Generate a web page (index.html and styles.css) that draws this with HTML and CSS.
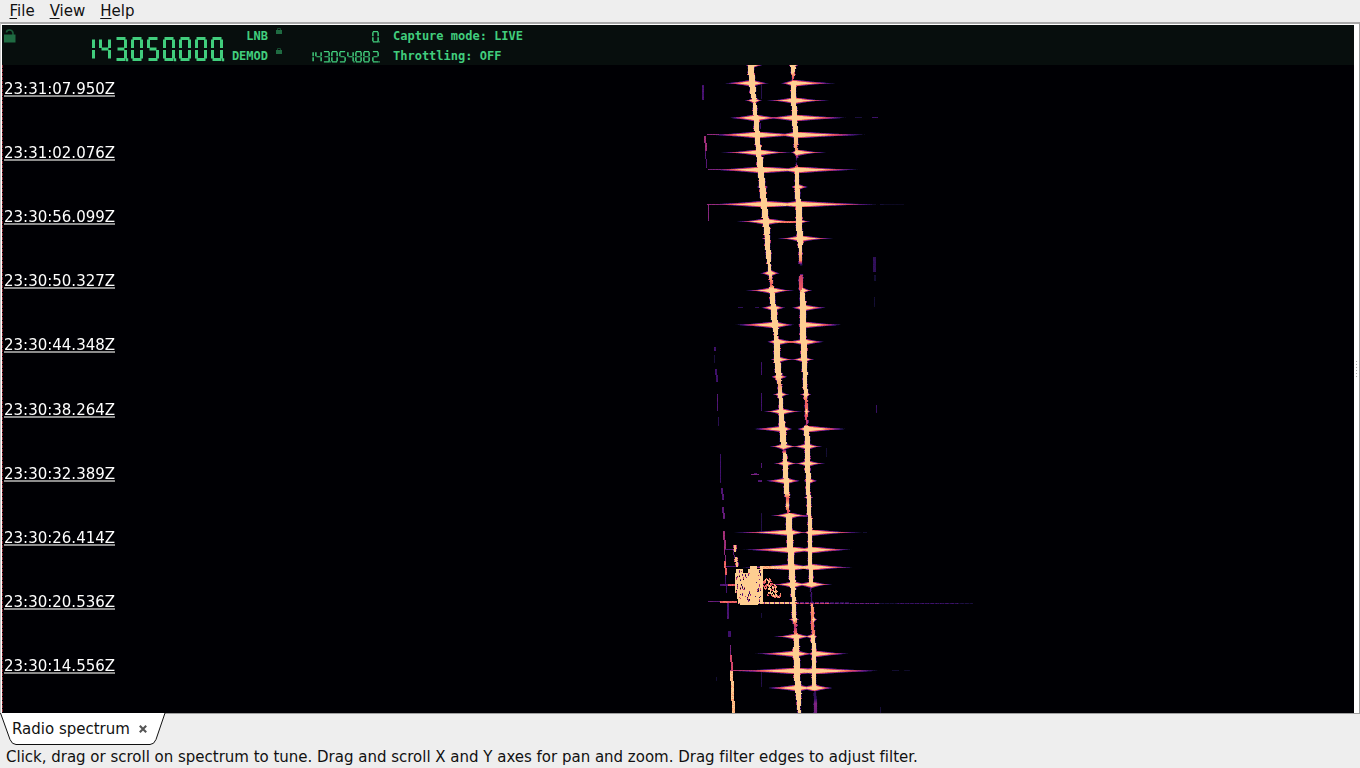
FILE: index.html
```html
<!DOCTYPE html>
<html lang="en">
<head>
    <meta charset="UTF-8">
    <meta name="viewport" content="width=device-width, initial-scale=1.0">
    <title>Radio spectrum</title>
    <link rel="stylesheet" href="styles.css">
</head>
<body>
    <nav class="menubar">
        <span><u>F</u>ile</span>
        <span><u>V</u>iew</span>
        <span><u>H</u>elp</span>
    </nav>

    <main class="frame">
        <div class="spectrum">
            <header class="tuner">
                <svg class="lock-main" viewBox="0 0 12 14" width="12" height="14">
                    <path d="M2.500 3.500Q2.500 1 5.500 1T9 4v2" fill="none" stroke="#1b5c39" stroke-width="1.6"/>
                    <rect x="0" y="5.500" width="11.500" height="8" fill="#1f6b42"/>
                </svg>
                <div class="lcd big" data-value="143.050.000."></div>
                <div class="labels">
                    <span>LNB</span>
                    <span>DEMOD</span>
                </div>
                <div class="locks">
                    <svg viewBox="0 0 6 7" width="6" height="7"><path d="M1.500 3V1.500h3V3" fill="none" stroke="#164a2f"/><rect y="3" width="6" height="4" fill="#1f6b42"/></svg>
                    <svg viewBox="0 0 6 7" width="6" height="7"><path d="M1.500 3V1.500h3V3" fill="none" stroke="#164a2f"/><rect y="3" width="6" height="4" fill="#1f6b42"/></svg>
                </div>
                <div class="offsets">
                    <div class="lcd small" data-value="0."></div>
                    <div class="lcd small" data-value="143.054.882."></div>
                </div>
                <div class="status">
                    <span>Capture mode: LIVE</span>
                    <span>Throttling: OFF</span>
                </div>
            </header>
            <div class="waterfall">
                <canvas id="waterfall" width="1352" height="648"></canvas>
                <div class="times">
                    <span>23:31:07.950Z</span>
                    <span>23:31:02.076Z</span>
                    <span>23:30:56.099Z</span>
                    <span>23:30:50.327Z</span>
                    <span>23:30:44.348Z</span>
                    <span>23:30:38.264Z</span>
                    <span>23:30:32.389Z</span>
                    <span>23:30:26.414Z</span>
                    <span>23:30:20.536Z</span>
                    <span>23:30:14.556Z</span>
                </div>
            </div>
        </div>
        <div class="splitter"><i></i><i></i><i></i><i></i><i></i><i></i></div>
    </main>

    <div class="tabs">
        <div class="tab">
            <svg class="tab-shape" width="168" height="32" viewBox="0 0 168 32">
                <path d="M0.5 0L10 26.5Q12 31.500 16 31.500H150Q154 31.500 156 26.500L165 0" fill="#fff" stroke="#111"/>
            </svg>
            <span>Radio spectrum</span>
            <svg class="close" width="8" height="8" viewBox="0 0 8 8"><path d="M0.800 0.800l6.400 6.400M7.200 0.800l-6.400 6.400" stroke="#555" stroke-width="2.1"/></svg>
        </div>
    </div>
    <footer class="statusbar">Click, drag or scroll on spectrum to tune. Drag and scroll X and Y axes for pan and zoom. Drag filter edges to adjust filter.</footer>

    <script src="waterfall.js"></script>
</body>
</html>
```
FILE: styles.css
```css
body {
    display: flex;
    flex-direction: column;
    height: 100vh;
    margin: 0;
    overflow: hidden;
    background-color: #eee;
    color: #111;
    font-family: "DejaVu Sans", sans-serif;
    font-size: 15px;
}
.menubar {
    display: flex;
    gap: 15px;
    height: 22px;
    padding-left: 9.500px;
    line-height: 22px;
}
.menubar u {
    text-underline-offset: 2px;
}
.frame {
    display: flex;
    box-sizing: border-box;
    height: 692px;
    padding: 1px 0 0 1px;
    border: 1px solid #a0a0a0;
    border-top: 2px solid #a9a9a9;
    border-left-color: #c8c8c8;
    background-color: #fff;
}
.spectrum {
    width: 1352px;
    background-color: #000004;
}
.tuner {
    display: flex;
    height: 40px;
    background-color: #070e0d;
    color: #41cd7d;
    font: bold 12px "DejaVu Sans Mono", monospace;
}
.lock-main {
    margin: 4px 0 0 2px;
}
.labels,
.status {
    display: flex;
    flex-direction: column;
    line-height: 20px;
    padding-top: 1px;
}
.labels {
    width: 44px;
    margin-left: 1px;
    text-align: right;
}
.locks {
    display: flex;
    flex-direction: column;
    gap: 13px;
    margin: 2px 0 0 8px;
}
.offsets {
    display: flex;
    flex-direction: column;
    align-items: flex-end;
    gap: 8.500px;
    width: 96.500px;
    margin-top: 6px;
}
.status {
    margin-left: 14.500px;
}

/* Seven segment readouts */
.lcd {
    display: flex;
}
.lcd.big {
    gap: 4px;
    width: 142px;
    margin: 11.500px 0 0 64.500px;
    padding-right: 0.500px;
    justify-content: flex-end;
}
.lcd.small {
    gap: 1.100px;
}
.lcd svg {
    overflow: visible;
    fill: none;
    stroke: #41cd7d;
    stroke-linecap: butt;
}
.big svg {
    width: 12px;
    height: 24px;
    stroke-width: 3px;
}
.small svg {
    width: 7px;
    height: 11.500px;
    stroke-width: 2.500px;
}

.waterfall {
    position: relative;
    height: 648px;
}
.waterfall canvas {
    display: block;
}
.times {
    position: absolute;
    top: 14px;
    left: 2px;
    display: flex;
    flex-direction: column;
    gap: 46.110px;
    color: #fff;
}
.times span {
    width: 111px;
    height: 16px;
    border-bottom: 2px solid #8c8c8c;
    line-height: 20px;
}
.splitter {
    display: flex;
    flex-direction: column;
    justify-content: center;
    gap: 2px;
    padding-left: 2px;
}
.splitter i {
    width: 1px;
    height: 1px;
    background-color: #aaa;
}

.tabs {
    height: 31px;
}
.tab {
    position: relative;
    display: flex;
    align-items: center;
    gap: 9px;
    width: 168px;
    height: 29px;
    padding-left: 12px;
    box-sizing: border-box;
}
.tab span,
.close {
    position: relative;
}
.tab-shape {
    position: absolute;
    top: -1px;
    left: 0;
}
.statusbar {
    flex-shrink: 0;
    padding: 1px 0 0 6px;
    line-height: 26px;
    letter-spacing: -0.008px;
    white-space: nowrap;
}
```
FILE: waterfall.js
```js
// ---- seven segment readouts ----
const SEGMENTS = {
    a: 'M1.500 1.500H10.500',
    b: 'M10.500 2.500V11',
    c: 'M10.500 13V21.500',
    d: 'M1.500 22.500H10.500',
    e: 'M1.500 13V21.500',
    f: 'M1.500 2.500V11',
    g: 'M2.500 12H9.500'
};
const DIGITS = {
    0: 'abcdef', 1: 'bc', 2: 'abged', 3: 'abgcd', 4: 'fgbc',
    5: 'afgcd', 6: 'afgedc', 7: 'abc', 8: 'abcdefg', 9: 'abcdfg'
};

document.querySelectorAll('.lcd').forEach(lcd => {
    lcd.setAttribute('aria-label', lcd.dataset.value);
    lcd.innerHTML = lcd.dataset.value.match(/\d\.?/g).map(cell => {
        let d = [...DIGITS[cell[0]]].map(s => SEGMENTS[s]).join('');
        if (cell[1]) d += 'M11 22.800h2.200';
        return `<svg viewBox="0 0 12 24" preserveAspectRatio="none"><path d="${d}"/></svg>`;
    }).join('');
});

// ---- waterfall ----
const X0 = 2, Y0 = 65, W = 1352, H = 648;
const level = new Float32Array(W * H);

let seed = 7;
function rnd() {
    seed = (seed * 1103515245 + 12345) % 2147483648;
    return seed / 2147483648;
}

function put(x, y, v) {
    x = Math.round(x) - X0;
    y = Math.round(y) - Y0;
    if (x < 0 || y < 0 || x >= W || y >= H) return;
    level[y * W + x] = Math.max(level[y * W + x], v);
}

// carriers: [y, centre, width, level]
const left = [
    [65, 751, 6, 1], [83, 752.3, 6, 1], [92, 752.7, 5, 1], [99, 754, 4, 1], [100, 753, 3, .4], [102, 754, 2, 0],
    [103, 755, 3, 1], [115, 755.700, 4, 1], [135, 757.5, 5, 1], [155, 759, 5, 1], [170, 761, 6, 1],
    [204, 764.3, 6, 1], [221, 766, 6, 1], [235, 767.3, 5, 1], [255, 768.5, 5, 1], [262, 769, 3, 1],
    [275, 770.5, 3, 1], [284, 771.5, 2, .7], [288, 771.8, 5, 1], [307, 773.5, 5, 1], [325, 775, 6, 1],
    [335, 776, 3, 1], [341, 776.5, 5, 1], [360, 777.5, 6, 1], [376, 778.5, 5, 1], [385, 779.5, 3, .9],
    [394, 780.5, 4, 1], [411, 781.5, 4, 1], [428, 782.7, 6, 1], [445, 783.5, 5, 1], [449, 784, 2, .3],
    [453, 784.3, 3, 1], [463, 785, 4, 1], [480, 786.3, 5, 1], [493, 787, 5, 1], [498, 787.7, 3, .7],
    [505, 787.7, 3, 1], [512, 788, 2, .6], [516, 789, 6, 1], [548, 790.5, 6, 1], [567, 791.7, 6, 1],
    [583, 792.5, 5, 1], [590, 793, 4, 1], [602, 793.7, 3, 1], [618, 794.7, 4, 1], [627, 795.3, 2, .5],
    [637, 796, 4, 1], [653, 796.5, 6, 1], [688, 798, 6, 1], [700, 798.7, 4, 1], [713, 799, 2, 1]
];
const right = [
    [65, 793, 5, 1], [72, 793, 3, 1], [79, 793, 1, .6], [83, 793.3, 5, 1], [100, 794, 5, 1], [120, 794.7, 5, 1],
    [134, 795.5, 4, 1], [146, 796, 3, .9], [153, 796.5, 2, .8], [158, 796.5, 1, .3], [161, 796.5, 1, 0],
    [164, 796.6, 1, .4], [168, 796.8, 4, 1], [187, 797.5, 4, 1], [204, 798.3, 5, 1], [221, 799.3, 6, 1],
    [238, 800, 6, 1], [248, 800.3, 3, 1], [260, 800.5, 3, .85], [264, 800.7, 2, .2], [266, 801, 2, 0],
    [273, 801, 2, 0], [275, 801.2, 3, .6], [289, 801.6, 4, .7], [292, 802.3, 4, 1], [307, 803, 6, 1],
    [341, 803.7, 6, 1], [360, 804.3, 5, 1], [376, 805, 4, 1], [394, 805.5, 3, 1], [402, 806, 2, .7],
    [411, 806.3, 3, .8], [424, 806.6, 1, .5], [426, 807, 5, 1], [463, 807.8, 5, 1], [480, 808, 4, 1],
    [497, 808.8, 4, 1], [516, 809.3, 3, 1], [532, 810, 4, 1], [567, 810.7, 4, 1], [585, 811, 3, 1],
    [587, 811, 1, .3], [602, 811.6, 1, .2], [604, 812.3, 2, .9], [625, 813, 3, .75], [635, 813.4, 3, .8],
    [637, 813.6, 4, 1], [687, 814.5, 4, 1], [689, 815, 2, .2], [698, 815, 2, .2], [703, 815.3, 3, .4], [713, 815.7, 3, .35]
];

function carrier(points) {
    for (let i = 0; i < points.length - 1; i++) {
        const [ya, xa, wa, va] = points[i];
        const [yb, xb, wb, vb] = points[i + 1];
        for (let y = ya; y < yb; y++) {
            const t = (y - ya) / (yb - ya);
            const x = xa + (xb - xa) * t;
            const w = wa + (wb - wa) * t + .4;
            const v = va + (vb - va) * t;
            const a = Math.round(x - w / 2);
            const b = a + Math.max(1, Math.round(w));
            for (let k = a; k < b; k++) put(k, y, v);
            // edge pixels change every few rows
            const step = Math.floor(y / 3);
            put(a - 1, y, v * (step % 3 ? .15 : .75) * rnd());
            put(b, y, v * (step % 4 ? .15 : .75) * rnd());
        }
    }
}
carrier(left);
carrier(right);

// bursts: [y, centre, from x, to x]
const bursts = [
    [65, 751, 745, 762], [65, 793, 788, 798],
    [82.700, 752, 719, 771], [82.700, 793, 778, 842], [100, 754, 744, 762], [100, 794, 766, 829],
    [117.400, 755, 723, 786], [117.400, 795, 757, 858], [134.400, 757, 700, 818], [134.400, 796, 770, 882],
    [152, 759, 720, 792], [152, 796, 790, 826], [169.300, 761, 700, 838], [169.300, 797, 770, 870],
    [186.5, 762, 755, 769], [186.5, 797, 789, 810], [203.800, 764, 697, 844], [203.800, 798, 760, 888],
    [221, 766, 736, 798], [221, 798, 794, 810], [238, 767, 761, 770], [238, 800, 777, 833],
    [272.700, 770, 758, 781], [290, 772, 745, 794], [290, 802, 799, 812], [307.300, 773, 758, 787],
    [307.300, 803, 789, 830], [324.400, 775, 725, 798], [324.400, 803, 796, 851], [341.400, 777, 764, 800],
    [341.400, 804, 780, 828], [359, 777, 770, 795], [359, 804, 789, 814], [376.400, 778, 769, 789],
    [394, 780, 772, 789], [394, 806, 799, 811], [411, 781, 763, 802], [411, 806, 803, 810],
    [428.5, 783, 745, 794], [428.5, 807, 794, 856], [446, 783, 769, 798], [446, 807, 789, 822],
    [463, 785, 773, 798], [463, 807, 793, 825], [480.400, 786, 760, 803], [480.400, 808, 802, 819],
    [497, 808, 803, 813], [515, 789, 770, 810], [532, 790, 733, 808], [532, 810, 802, 862],
    [549.300, 791, 734, 832], [549.300, 811, 790, 858], [566.800, 792, 735, 824], [566.800, 811, 790, 858],
    [584, 793, 770, 812], [584, 811, 790, 832], [619, 794, 788, 799], [619, 813, 810, 817],
    [636, 796, 773, 814], [636, 813, 802, 817], [653.300, 796, 747, 817], [653.300, 814, 806, 855],
    [670.400, 797, 716, 854], [670.400, 814, 780, 894], [687.5, 798, 758, 822], [687.5, 814, 790, 837]
];
bursts.forEach(([cy, cx, xa, xb]) => {
    for (let x = xa; x <= xb; x++) {
        const t = x < cx ? (cx - x) / (cx - xa) : (x - cx) / (xb - cx);
        const peak = 1.850 * Math.pow(Math.max(0, 1 - t), 1.2);
        for (let y = Math.floor(cy) - 2; y <= Math.floor(cy) + 3; y++) {
            const off = Math.abs(y - cy);
            const drop = off * (.42 + t * .3);
            put(x, y, peak - drop + (peak > .15 ? (rnd() - .5) * .08 : 0));
        }
    }
});

// thin marks: [x1, y1, x2, y2, width, level]
const marks = [
    [702, 85, 702, 99, 2, .28], [704, 136, 705, 150, 2, .5], [705, 151, 706, 167, 1, .32],
    [708, 205, 708, 220, 1, .42], [707, 204, 720, 204, 1, .45], [707, 134, 718, 134, 1, .45],
    [708, 169, 720, 169, 1, .4], [761, 84, 761, 98, 1, .17], [760, 123, 760, 128, 1, .25],
    [873, 257, 873, 271, 3, .2], [874, 275, 874, 280, 2, .1], [874, 297, 874, 306, 1, .1],
    [876, 405, 876, 412, 1, .22], [714, 347, 714, 350, 2, .25], [714, 355, 714, 362, 1, .12],
    [715, 369, 716, 381, 2, .25], [717, 394, 717, 410, 1, .3], [718, 417, 718, 425, 1, .18],
    [720, 454, 720, 482, 1, .25], [721, 488, 722, 499, 2, .3], [722, 507, 723, 518, 2, .34],
    [723, 531, 724, 548, 2, .5], [724, 549, 725, 560, 1, .45], [724, 561, 725, 574, 2, .75],
    [725, 575, 726, 592, 1, .25], [727, 603, 727, 618, 2, .28], [728, 631, 728, 636, 3, .25],
    [730, 645, 730, 655, 1, .4], [730, 655, 731, 669, 2, .65], [730, 671, 731, 690, 3, 1],
    [731, 690, 732, 712, 3, 1], [761, 362, 761, 374, 1, .25], [761, 393, 761, 410, 1, .25],
    [761, 463, 761, 467, 1, .3], [751, 474, 758, 474, 1, .4], [754, 473, 756, 473, 1, .3],
    [758, 480, 761, 480, 2, .3],
    [761, 513, 761, 531, 1, .15], [761, 613, 761, 617, 1, .12], [761, 671, 761, 686, 1, .15],
    [716, 677, 716, 680, 1, .1], [880, 707, 880, 712, 1, .12], [826, 448, 826, 456, 1, .1],
    [783, 359, 799, 359, 1, .28], [775, 341, 804, 341, 2, .75], [785, 446, 805, 446, 1, .25],
    [790, 515, 808, 515, 2, .35], [765, 221, 800, 221, 2, .8], [755, 117, 790, 117, 1, .55],
    [758, 169, 800, 169, 2, .95], [764, 204, 800, 204, 2, .95], [758, 134, 798, 134, 2, .65],
    [761, 566, 812, 566, 3, .95], [790, 549, 812, 549, 2, .9], [797, 670, 815, 670, 3, .95],
    [798, 687, 812, 687, 1, .6], [724, 549, 733, 549, 1, .3], [725, 566, 735, 566, 1, .3],
    [720, 584, 735, 584, 2, .3], [728, 584, 736, 584, 2, .75], [730, 670, 765, 670, 1, .55],
    [872, 117, 877, 117, 1, .25], [855, 117, 861, 117, 1, .12], [880, 204, 883, 204, 1, .1],
    [892, 670, 898, 670, 1, .1], [904, 670, 909, 670, 1, .08], [863, 532, 866, 532, 1, .1],
    [738, 307, 742, 307, 1, .2], [755, 307, 758, 307, 1, .2], [884, 204, 903, 204, 1, .06],
    [708, 601, 728, 601, 1, .35], [720, 601, 736, 601, 2, .75], [760, 567, 760, 600, 3, 1]
];
marks.forEach(([xa, ya, xb, yb, w, v]) => {
    const n = Math.max(Math.abs(xb - xa), Math.abs(yb - ya), 1);
    const flat = Math.abs(xb - xa) > Math.abs(yb - ya);
    for (let i = 0; i <= n; i++) {
        const x = xa + (xb - xa) * i / n;
        const y = ya + (yb - ya) * i / n;
        for (let k = 0; k < w; k++) {
            put(x + (flat ? 0 : k), y + (flat ? k : 0), v * (.85 + rnd() * .2));
        }
    }
});

// meteor echo
function hole(x, y, v) {
    level[(y - Y0) * W + x - X0] = v;
}
for (let y = 566; y < 605; y++) {
    for (let x = 735; x < 763; x++) {
        if (y < 569 && !(x > 749 && x < 757) && x < 760) continue;
        if (y < 573 && (x < 736 || (x > 742 && x < 748))) continue;
        if (y > 592 && x < 736 + (y - 592) / 6) continue;
        if (y > 602 && (x < 740 || x > 757)) continue;
        put(x, y, 1);
    }
}
for (let n = 0; n < 75; n++) {
    const x = 736 + Math.floor(rnd() * 25);
    const y = 570 + Math.floor(rnd() * 30);
    if (x > 749 && x < 757 && rnd() < .8) continue;
    const tall = 1 + Math.floor(rnd() * 3);
    for (let k = 0; k < tall; k++) hole(x, y + k, rnd() * .7);
}
// ragged tail right of the echo
for (let y = 578; y < 597; y++) {
    const from = y < 588 ? 763 : 765 + Math.floor((y - 588) / 3);
    const to = y < 583 ? 771 : Math.min(781, 774 + (y - 583) / 1.5);
    for (let x = from; x < to; x++) {
        if (rnd() > .3) continue;
        const v = .6 + rnd() * .5;
        put(x, y, v);
        put(x, y + 1, v * .9);
        if (rnd() < .5) put(x + 1, y + 1, v);
    }
}
for (let y = 545; y < 567; y++) {
    const x = y < 551 ? 733 : 733 + (y - 551) / 7;
    if (y >= 552 && y < 557) {
        put(x, y, .3);
        continue;
    }
    for (let k = 0; k < 4; k++) put(x + k, y, k > 0 && k < 3 ? .95 : rnd() * .9);
}

// dashed noise line under the echo
for (let x = 738; x < 973; x++) {
    const fade = x < 795 ? 1 : x < 830 ? .6 : x < 880 ? .32 : x < 897 ? .12 : x < 958 ? .22 : .12;
    const on = x % 5 < 4;
    put(x, 602, x < 797 ? (on ? .95 : .4) : x < 850 && on ? fade * .5 : 0);
    put(x, 603, on ? fade * (.8 + rnd() * .4) : fade * .4);
}

// colour map, from black over purple and pink to cream
const stops = [
    [0, 0, 0, 4], [.1, 20, 14, 54], [.25, 66, 16, 112], [.4, 130, 37, 129],
    [.55, 190, 55, 112], [.7, 236, 88, 96], [.85, 252, 145, 104], [1, 254, 206, 145]
];
function colour(v) {
    v = Math.min(1, Math.max(0, v));
    let i = 1;
    while (stops[i][0] < v) i++;
    const a = stops[i - 1], b = stops[i];
    const t = (v - a[0]) / (b[0] - a[0]);
    return [1, 2, 3].map(c => a[c] + (b[c] - a[c]) * t);
}

const ctx = document.getElementById('waterfall').getContext('2d');
const image = ctx.createImageData(W, H);
for (let i = 0; i < level.length; i++) {
    const c = colour(level[i]);
    image.data.set([c[0], c[1], c[2], 255], i * 4);
}
ctx.putImageData(image, 0, 0);

// filter edge
ctx.fillStyle = '#8a2c35';
for (let y = 0; y < H; y += 4) ctx.fillRect(0, y, 1, 3);
```
